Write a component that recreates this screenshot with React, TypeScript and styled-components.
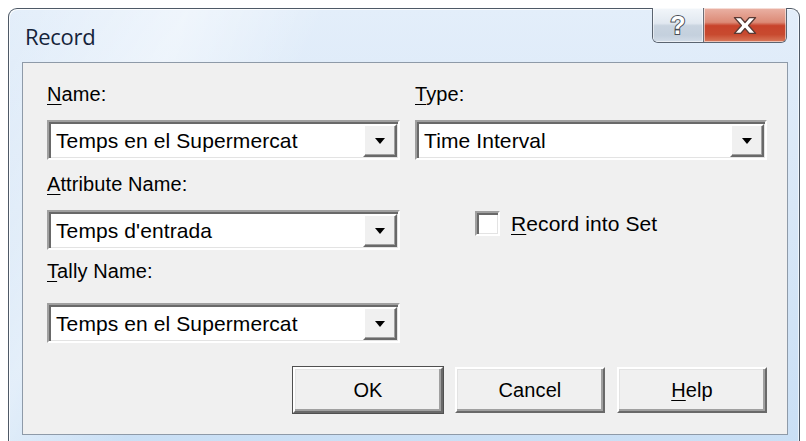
import React from 'react'
import styled, { createGlobalStyle } from 'styled-components'

const GlobalStyle = createGlobalStyle`
  html, body {
    margin: 0;
    padding: 0;
    background: #ffffff;
    overflow: hidden;
  }
  body {
    width: 806px;
    height: 441px;
    font-family: 'Liberation Sans', Arial, sans-serif;
  }
`

const Window = styled.div`
  box-sizing: border-box;
  width: 792px;
  height: 440px;
  margin: 8px 0 0 8px;
  border: 1px solid #4e5966;
  border-bottom: none;
  border-radius: 9px 9px 0 0;
  background:
    linear-gradient(115deg, rgba(255, 255, 255, 0) 0%, rgba(255, 255, 255, 0.45) 18%, rgba(255, 255, 255, 0) 32%),
    linear-gradient(180deg, #e3eefa 0%, #d8e7f7 45%, #c9dff5 100%);
  box-shadow: inset 1px 1px 0 rgba(255, 255, 255, 0.8), inset -1px 0 0 rgba(255, 255, 255, 0.6);
  display: flex;
  flex-direction: column;
`

const TitleBar = styled.div`
  height: 53px;
  display: flex;
  justify-content: space-between;
  align-items: flex-start;
  padding-left: 16px;
  padding-right: 12px;
`

const Caption = styled.div`
  margin-top: 13px;
  font-family: 'Open Sans', 'Noto Sans', sans-serif;
  font-size: 22px;
  line-height: 28px;
  color: #15233a;
  letter-spacing: -0.3px;
`

const CaptionButtons = styled.div`
  display: flex;
  height: 34px;
  margin-top: -1px;
  border: 1px solid #5b6470;
  border-top: none;
  border-radius: 0 0 6px 6px;
  overflow: hidden;
`

const CaptionButton = styled.div<{ $close?: boolean }>`
  width: ${(p) => (p.$close ? '82px' : '50px')};
  display: flex;
  align-items: center;
  justify-content: center;
  box-shadow: inset 0 0 0 1px rgba(255, 255, 255, 0.55);
  background: ${(p) =>
    p.$close
      ? 'linear-gradient(180deg, #eab2a5 0%, #dc8a76 42%, #c8432b 52%, #c84a2f 78%, #d97a5c 100%)'
      : 'linear-gradient(180deg, #f2f6fa 0%, #e1e8f0 45%, #c9d4e0 52%, #c4d0dd 80%, #d3dde8 100%)'};
  & + & {
    border-left: 1px solid #6b6f78;
  }
`

const HelpMark = styled.span`
  font-family: 'Liberation Sans', Arial, sans-serif;
  font-weight: bold;
  font-size: 25px;
  line-height: 25px;
  color: #ffffff;
  -webkit-text-stroke: 2px #4a4f58;
  paint-order: stroke fill;
`

const Client = styled.div`
  box-sizing: border-box;
  margin: 0 11px 0 13px;
  height: 373px;
  border: 1px solid #8e9aa8;
  background: #f0f0f0;
  padding: 20px 20px 0 24px;
  display: flex;
  flex-direction: column;
`

const Fields = styled.div`
  display: grid;
  grid-template-columns: 353px 352px;
  column-gap: 15px;
  align-items: start;
`

const Field = styled.div<{ $top?: number }>`
  display: flex;
  flex-direction: column;
  margin-top: ${(p) => p.$top ?? 0}px;
`

const Label = styled.div<{ $gap?: number }>`
  font-size: 20px;
  line-height: 23px;
  color: #000;
  letter-spacing: 0.1px;
  margin-bottom: ${(p) => p.$gap ?? 14}px;
  u {
    text-decoration-thickness: 1px;
    text-underline-offset: 3px;
  }
`

const Combo = styled.div`
  box-sizing: border-box;
  height: 40px;
  display: flex;
  align-items: center;
  background: #ffffff;
  border-style: solid;
  border-width: 2px;
  border-color: #a0a0a0 #ffffff #ffffff #a0a0a0;
  box-shadow: inset 2px 2px 0 #696969, inset -1px -1px 0 #e3e3e3;
  padding: 2px 1px 1px 2px;
`

const ComboText = styled.div`
  flex: 1;
  padding-left: 5px;
  font-size: 21px;
  letter-spacing: 0.1px;
  color: #000;
  white-space: nowrap;
`

const DropButton = styled.div`
  box-sizing: border-box;
  width: 34px;
  height: 100%;
  background: #f0f0f0;
  border-style: solid;
  border-width: 2px;
  border-color: #ffffff #696969 #696969 #ffffff;
  box-shadow: inset -1px -1px 0 #a0a0a0;
  display: flex;
  align-items: center;
  justify-content: center;
`

const Arrow = styled.span`
  width: 0;
  height: 0;
  border-left: 5px solid transparent;
  border-right: 5px solid transparent;
  border-top: 6px solid #000;
  margin-top: 1px;
`

const CheckRow = styled.label`
  display: flex;
  align-items: center;
  gap: 11px;
  margin: 51px 0 0 60px;
  font-size: 21px;
  letter-spacing: 0.1px;
  color: #000;
  u {
    text-decoration-thickness: 1px;
    text-underline-offset: 3px;
  }
`

const CheckBox = styled.span`
  box-sizing: border-box;
  width: 25px;
  height: 25px;
  background: #ffffff;
  border-style: solid;
  border-width: 2px;
  border-color: #a0a0a0 #ffffff #ffffff #a0a0a0;
  box-shadow: inset 2px 2px 0 #696969, inset -1px -1px 0 #e3e3e3;
`

const ButtonRow = styled.div`
  display: flex;
  justify-content: flex-end;
  gap: 12px;
  margin-top: 24px;
`

const Button = styled.button<{ $default?: boolean }>`
  box-sizing: border-box;
  width: 150px;
  height: 46px;
  padding: 0;
  font-family: 'Liberation Sans', Arial, sans-serif;
  font-size: 20px;
  letter-spacing: 0.1px;
  color: #000;
  background: #f0f0f0;
  border-style: solid;
  border-width: 2px;
  border-color: #ffffff #696969 #696969 #ffffff;
  box-shadow: inset -2px -2px 0 #a0a0a0, inset 1px 1px 0 #e3e3e3
    ${(p) => (p.$default ? ', 0 0 0 1px #505050' : '')};
  u {
    text-decoration-thickness: 1px;
    text-underline-offset: 3px;
  }
`

const CloseGlyph = () => (
  <svg width="28" height="19" viewBox="0 0 26 18">
    <path
      d="M3 1.5 H9 L13 6.2 L17 1.5 H23 L16.4 9 L23 16.5 H17 L13 11.8 L9 16.5 H3 L9.6 9 Z"
      fill="#ffffff"
      stroke="#5a3a34"
      strokeWidth="1.3"
      strokeLinejoin="round"
    />
  </svg>
)

const DropDown = ({ value }: { value: string }) => (
  <Combo>
    <ComboText>{value}</ComboText>
    <DropButton>
      <Arrow />
    </DropButton>
  </Combo>
)

const App: React.FunctionComponent = () => {
  return (
    <>
      <GlobalStyle />
      <Window>
        <TitleBar>
          <Caption>Record</Caption>
          <CaptionButtons>
            <CaptionButton>
              <HelpMark>?</HelpMark>
            </CaptionButton>
            <CaptionButton $close>
              <CloseGlyph />
            </CaptionButton>
          </CaptionButtons>
        </TitleBar>
        <Client>
          <Fields>
            <Field>
              <Label>
                <u>N</u>ame:
              </Label>
              <DropDown value="Temps en el Supermercat" />
            </Field>
            <Field>
              <Label>
                <u>T</u>ype:
              </Label>
              <DropDown value="Time Interval" />
            </Field>
            <Field $top={13}>
              <Label>
                <u>A</u>ttribute Name:
              </Label>
              <DropDown value="Temps d'entrada" />
            </Field>
            <CheckRow>
              <CheckBox />
              <span>
                <u>R</u>ecord into Set
              </span>
            </CheckRow>
            <Field $top={10}>
              <Label $gap={20}>
                <u>T</u>ally Name:
              </Label>
              <DropDown value="Temps en el Supermercat" />
            </Field>
          </Fields>
          <ButtonRow>
            <Button $default>OK</Button>
            <Button>Cancel</Button>
            <Button>
              <u>H</u>elp
            </Button>
          </ButtonRow>
        </Client>
      </Window>
    </>
  )
}

export default App
